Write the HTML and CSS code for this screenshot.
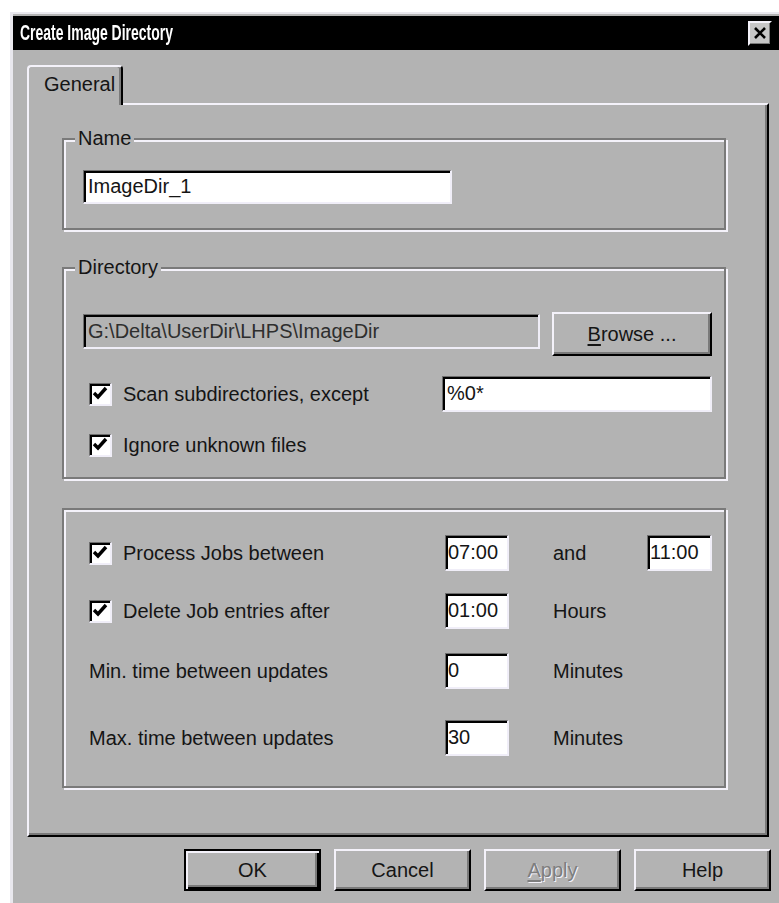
FILE: index.html
```html
<!DOCTYPE html>
<html lang="en">
<head>
<meta charset="utf-8">
<title>Create Image Directory</title>
<link rel="stylesheet" href="styles.css">
</head>
<body>
<div class="window">
  <div class="titlebar">
    <span class="title">Create Image Directory</span>
    <button class="close" aria-label="Close">
      <svg viewBox="0 0 16 16"><path d="M3 3L13 13M13 3L3 13" stroke="#000" stroke-width="2.6" fill="none"/></svg>
    </button>
  </div>

  <div class="tabs">
    <div class="tab">General</div>
  </div>

  <div class="panel">
    <div class="group group-name">
      <span class="group-label">Name</span>
      <div class="field name-field">ImageDir_1</div>
    </div>

    <div class="group group-dir">
      <span class="group-label">Directory</span>
      <div class="dir-row">
        <div class="field path-field">G:\Delta\UserDir\LHPS\ImageDir</div>
        <button class="btn browse"><u>B</u>rowse ...</button>
      </div>
      <div class="check-row row-except">
        <label class="check">
          <span class="box"><svg viewBox="0 0 20 20"><path d="M4 9l4 4 8-9" fill="none" stroke="#000" stroke-width="3.4"/></svg></span>
          Scan subdirectories, except
        </label>
        <div class="field except-field">%0*</div>
      </div>
      <div class="check-row row-ignore">
        <label class="check">
          <span class="box"><svg viewBox="0 0 20 20"><path d="M4 9l4 4 8-9" fill="none" stroke="#000" stroke-width="3.4"/></svg></span>
          Ignore unknown files
        </label>
      </div>
    </div>

    <div class="group group-jobs">
      <div class="job-row">
        <label class="check">
          <span class="box"><svg viewBox="0 0 20 20"><path d="M4 9l4 4 8-9" fill="none" stroke="#000" stroke-width="3.4"/></svg></span>
          Process Jobs between
        </label>
        <div class="field time-field">07:00</div>
        <span class="unit">and</span>
        <div class="field time-field">11:00</div>
      </div>
      <div class="job-row">
        <label class="check">
          <span class="box"><svg viewBox="0 0 20 20"><path d="M4 9l4 4 8-9" fill="none" stroke="#000" stroke-width="3.4"/></svg></span>
          Delete Job entries after
        </label>
        <div class="field time-field">01:00</div>
        <span class="unit">Hours</span>
      </div>
      <div class="job-row gap-md">
        <span>Min. time between updates</span>
        <div class="field time-field">0</div>
        <span class="unit">Minutes</span>
      </div>
      <div class="job-row gap-lg">
        <span>Max. time between updates</span>
        <div class="field time-field">30</div>
        <span class="unit">Minutes</span>
      </div>
    </div>
  </div>

  <div class="actions">
    <button class="btn btn-default">OK</button>
    <button class="btn">Cancel</button>
    <button class="btn btn-disabled"><u>A</u>pply</button>
    <button class="btn">Help</button>
  </div>
</div>
</body>
</html>
```
FILE: styles.css
```css
* {
  box-sizing: border-box;
}

html,
body {
  margin: 0;
  height: 100%;
}

body {
  background: #fff;
  overflow: hidden;
  font-family: "Liberation Sans", Arial, sans-serif;
  font-size: 20px;
  color: #151515;
}

/* dialog frame */
.window {
  width: 769px;
  height: 891px;
  margin: 12px 0 0 10px;
  padding-top: 2px;
  border-top: 2px solid #e9e8ee;
  border-left: 3px solid #e9e8ee;
  background: #b3b3b3;
}

.titlebar {
  height: 34px;
  padding: 0 7px;
  background: #000;
  display: flex;
  align-items: center;
  justify-content: space-between;
}

.title {
  display: inline-block;
  color: #fff;
  font-weight: bold;
  font-size: 22px;
  white-space: nowrap;
  transform: scaleX(0.635);
  transform-origin: left center;
}

.close {
  width: 24px;
  height: 25px;
  padding: 0;
  background: #c6c6c6;
  border: 2px solid;
  border-color: #f4f2fa #000 #000 #f4f2fa;
  box-shadow: inset -1px -1px 0 #7a7a7a;
  display: flex;
  align-items: center;
  justify-content: center;
}

.close svg {
  width: 16px;
  height: 16px;
  display: block;
}

/* tab strip */
.tabs {
  display: flex;
  margin-top: 15px;
  padding-left: 14px;
  position: relative;
  z-index: 1;
}

.tab {
  width: 96px;
  height: 40px;
  margin-bottom: -2px;
  padding: 0 0 4px 15px;
  background: #b3b3b3;
  border-top: 2px solid #f4f2fa;
  border-left: 2px solid #f4f2fa;
  border-right: 2px solid #000;
  border-radius: 4px 4px 0 0;
  box-shadow: inset -2px 0 0 #7a7a7a;
  display: flex;
  align-items: center;
}

.panel {
  height: 734px;
  margin: 0 10px 0 14px;
  padding: 33px 41px 0 33px;
  border: 2px solid;
  border-color: #f4f2fa #000 #000 #f4f2fa;
  box-shadow: inset -2px -2px 0 #7a7a7a;
}

/* etched group boxes */
.group {
  position: relative;
  border: 2px solid #7a7a7a;
  box-shadow: inset 2px 2px 0 #f4f2fa, 2px 2px 0 #f4f2fa;
}

.group-label {
  position: absolute;
  top: -14px;
  left: 11px;
  padding: 0 3px;
  line-height: 24px;
  background: #b3b3b3;
}

.group-name {
  height: 92px;
  padding: 30px 0 0 19px;
}

.group-dir {
  height: 212px;
  margin-top: 37px;
  padding: 43px 12px 0 19px;
}

.group-jobs {
  height: 280px;
  margin-top: 29px;
  padding: 25px 0 0 25px;
}

/* sunken text fields */
.field {
  background: #fff;
  border-style: solid;
  border-width: 1px 2px 2px 1px;
  border-color: #6e6e6e #f0eef8 #f0eef8 #6e6e6e;
  box-shadow: inset 2px 2px 0 #000;
  padding: 0 4px;
  display: flex;
  align-items: center;
  white-space: nowrap;
  overflow: hidden;
}

.name-field {
  width: 369px;
  height: 34px;
}

.dir-row {
  display: flex;
  align-items: flex-start;
  gap: 12px;
}

.path-field {
  width: 457px;
  height: 35px;
  margin-top: 2px;
  background: transparent;
  color: #2e2e2e;
}

.check-row {
  display: flex;
  align-items: center;
  padding-left: 6px;
}

.row-except {
  height: 36px;
  margin-top: 20px;
}

.row-ignore {
  height: 24px;
  margin-top: 21px;
}

.except-field {
  width: 270px;
  height: 36px;
  margin-left: auto;
}

.check {
  display: flex;
  align-items: center;
  gap: 11px;
  white-space: nowrap;
}

.box {
  width: 23px;
  height: 23px;
  flex: none;
  background: #fff;
  border-style: solid;
  border-width: 1px 2px 2px 1px;
  border-color: #6e6e6e #f0eef8 #f0eef8 #6e6e6e;
  box-shadow: inset 2px 2px 0 #000;
}

.box svg {
  width: 20px;
  height: 20px;
  display: block;
}

/* job scheduling rows */
.job-row {
  display: grid;
  grid-template-columns: 356px 64px 138px 65px;
  align-items: center;
  height: 36px;
  white-space: nowrap;
}

.job-row + .job-row {
  margin-top: 22px;
}

.job-row.gap-md {
  margin-top: 24px;
}

.job-row.gap-lg {
  margin-top: 31px;
}

.time-field {
  height: 36px;
  padding: 0 1px 0 2px;
}

.unit {
  padding-left: 44px;
}

/* push buttons */
.btn {
  width: 137px;
  height: 42px;
  padding: 0;
  font: inherit;
  color: #151515;
  background: #b3b3b3;
  border: 2px solid;
  border-color: #f4f2fa #000 #000 #f4f2fa;
  box-shadow: inset -2px -2px 0 #7a7a7a;
}

.btn u {
  text-underline-offset: 3px;
}

.browse {
  width: 160px;
  height: 44px;
}

.actions {
  display: flex;
  justify-content: flex-end;
  gap: 13px;
  margin-top: 12px;
  padding-right: 8px;
}

.btn-default {
  border-color: #000;
  box-shadow: inset 2px 2px 0 #f4f2fa, inset -2px -2px 0 #000, inset -4px -4px 0 #7a7a7a;
}

.btn-disabled {
  color: #7e7e7e;
  text-shadow: 1px 1px 0 #f4f2fa;
}
```
